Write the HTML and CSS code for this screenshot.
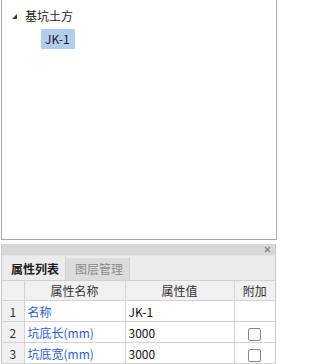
FILE: index.html
```html
<!DOCTYPE html>
<html lang="zh">
<head>
<meta charset="utf-8">
<link rel="stylesheet" href="styles.css">
</head>
<body>
<div class="tree">
  <div class="node root">
    <svg class="arrow" width="5" height="5" viewBox="0 0 5 5"><polygon points="5,0 5,5 0,5" fill="#3a3a3a"/></svg>
    <span>基坑土方</span>
  </div>
  <div class="node child"><span class="sel">JK-1</span></div>
</div>
<div class="panel">
  <div class="titlebar">
    <svg class="close" width="7" height="7" viewBox="0 0 7 7"><path d="M1 1L6 6M6 1L1 6" stroke="#8a8a8a" stroke-width="1.6"/></svg>
  </div>
  <div class="tabs">
    <div class="tab active">属性列表</div>
    <div class="tab">图层管理</div>
  </div>
  <table class="grid">
    <colgroup>
      <col class="c-num"><col class="c-name"><col class="c-val"><col class="c-add">
    </colgroup>
    <thead>
      <tr><th></th><th>属性名称</th><th>属性值</th><th>附加</th></tr>
    </thead>
    <tbody>
      <tr><td class="num">1</td><td class="name">名称</td><td class="val">JK-1</td><td class="add"></td></tr>
      <tr><td class="num">2</td><td class="name">坑底长(mm)</td><td class="val">3000</td><td class="add"><span class="cb"></span></td></tr>
      <tr><td class="num">3</td><td class="name">坑底宽(mm)</td><td class="val">3000</td><td class="add"><span class="cb"></span></td></tr>
    </tbody>
  </table>
</div>
</body>
</html>
```

FILE: styles.css
```css
* { box-sizing: border-box; }
html, body {
  margin: 0;
  padding: 0;
  background: #ffffff;
  width: 277px;
  height: 364px;
  overflow: hidden;
  font-family: "Noto Sans CJK SC", "Noto Sans", sans-serif;
  font-size: 12px;
  color: #1a1a1a;
}
.tree {
  margin-left: 1px;
  width: 276px;
  height: 240px;
  border: 1px solid #a9a9a9;
  border-top: none;
  padding-top: 6px;
}
.node {
  display: flex;
  align-items: center;
  height: 20px;
  line-height: 20px;
}
.root {
  padding-left: 10px;
}
.arrow {
  margin-right: 8px;
}
.child {
  margin-top: 3px;
  padding-left: 39px;
}
.sel {
  display: inline-block;
  height: 20px;
  line-height: 20px;
  padding: 0 5px 0 4px;
  background: #b3cdee;
}
.panel {
  margin-top: 4px;
  margin-left: 1px;
  width: 275px;
  border-left: 1px solid #c8c8c8;
  border-right: 1px solid #c8c8c8;
  background: #ececec;
}
.titlebar {
  height: 11px;
  background: #d5d7db;
  display: flex;
  justify-content: flex-end;
  align-items: center;
  padding-right: 4px;
}
.tabs {
  display: flex;
  height: 25px;
  border-top: 1px solid #e4e4e4;
  background: #ececec;
}
.tab {
  width: 64px;
  padding-left: 9px;
  line-height: 22px;
  color: #8a8a8a;
  background: #dcdcdc;
  margin-top: 2px;
  border-right: 1px solid #d0d0d0;
}
.tab.active {
  margin-top: 0;
  color: #222222;
  background: #ececec;
  border-right: 1px solid #d4d4d4;
  line-height: 25px;
  font-weight: 600;
}
.grid {
  width: 273px;
  border-collapse: collapse;
  table-layout: fixed;
  background: #ffffff;
}
.c-num { width: 22px; }
.c-name { width: 101px; }
.c-val { width: 109px; }
.c-add { width: 41px; }
.grid th, .grid td {
  border: 1px solid #d2d2d2;
  height: 21px;
  padding: 0;
  line-height: 19px;
  white-space: nowrap;
  overflow: hidden;
}
.grid tr > :first-child { border-left: none; }
.grid tr > :last-child { border-right: none; }
.grid th {
  background: #f0f0f0;
  font-weight: normal;
  color: #333333;
  height: 20px;
  text-align: center;
}
.grid td.num {
  background: #f0f0f0;
  text-align: center;
  color: #333333;
}
.grid td.name {
  color: #2b5cd8;
  padding-left: 3px;
}
.grid td.val {
  padding-left: 3px;
  color: #111111;
}
.grid td.add {
  text-align: center;
}
.cb {
  display: inline-block;
  width: 13px;
  height: 13px;
  border: 1px solid #858585;
  border-radius: 2px;
  vertical-align: middle;
  background: #ffffff;
}
```
